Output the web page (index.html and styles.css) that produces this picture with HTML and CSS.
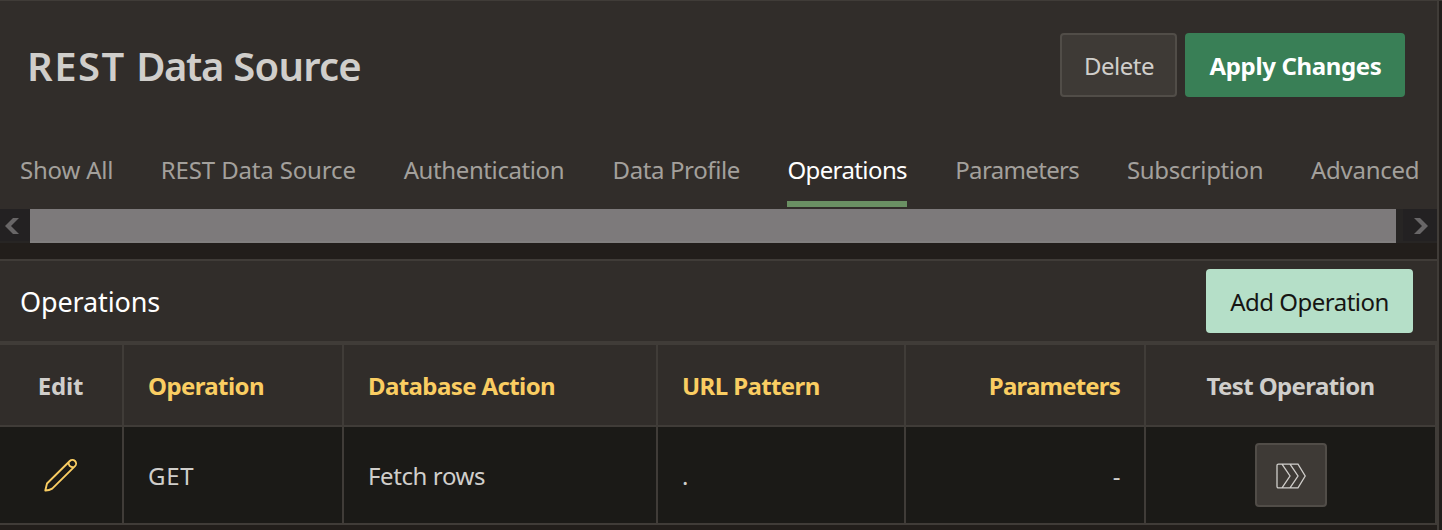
FILE: index.html
```html
<!DOCTYPE html>
<html lang="en">
<head>
<meta charset="utf-8">
<title>REST Data Source</title>
<link rel="stylesheet" href="styles.css">
</head>
<body>
<main class="page">
  <header class="header">
    <h1 class="title"><span class="title-rest">REST</span> <span class="title-data">Data</span> <span class="title-source">Source</span></h1>
    <div class="actions">
      <button class="btn btn-delete">Delete</button>
      <button class="btn btn-apply">Apply Changes</button>
    </div>
  </header>
  <nav class="tabs">
    <a class="tab tab-all">Show All</a>
    <a class="tab tab-source">REST Data Source</a>
    <a class="tab tab-auth">Authentication</a>
    <a class="tab tab-profile">Data Profile</a>
    <a class="tab tab-operations active">Operations</a>
    <a class="tab tab-params">Parameters</a>
    <a class="tab tab-subscription">Subscription</a>
    <a class="tab tab-advanced">Advanced</a>
  </nav>
  <div class="scrollbar">
    <div class="arrow arrow-left"><svg width="14" height="16" viewBox="0 0 14 16"><path d="M8 0h6L6 8l8 8H8L0 8z"/></svg></div>
    <div class="thumb"></div>
    <div class="arrow arrow-right"><svg width="14" height="16" viewBox="0 0 14 16"><path d="M6 0H0l8 8-8 8h6l8-8z"/></svg></div>
  </div>
  <section class="region">
    <div class="region-head">
      <h2 class="region-title">Operations</h2>
      <button class="btn btn-add">Add Operation</button>
    </div>
    <div class="grid">
      <div class="cell head center head-edit">Edit</div>
      <div class="cell head sort">Operation</div>
      <div class="cell head sort">Database Action</div>
      <div class="cell head sort">URL Pattern</div>
      <div class="cell head sort right sort-params">Parameters</div>
      <div class="cell head center">Test Operation</div>
      <div class="cell center">
        <svg class="pencil" width="34" height="34" viewBox="0 0 34 34"><path d="M1.300 32.500l1.700-7L25.800 3a3.500 3.500 0 0 1 5.200 5.200L8.200 30.600Q5 32.600 1.300 32.500zM24.600 4.200q-.6 4.600 5.200 5.200"/></svg>
      </div>
      <div class="cell get">GET</div>
      <div class="cell">Fetch rows</div>
      <div class="cell">.</div>
      <div class="cell right">-</div>
      <div class="cell center">
        <button class="btn btn-run"><svg width="30" height="26" viewBox="0 0 30 26"><path d="M2.500 1.200H22L29.200 13 22 24.800H2.500Q1 24.800 1 23.300V2.700Q1 1.200 2.500 1.200zM6 1.200L14 13 6 24.800M14 1.200L22 13 14 24.800"/></svg></button>
      </div>
    </div>
  </section>
</main>
</body>
</html>
```
FILE: styles.css
```css
* { box-sizing: border-box; }
body {
  margin: 0;
  height: 530px;
  overflow: hidden;
  background: #221e1b;
  color: #d0cecb;
  font: 24px/32px "Noto Sans", sans-serif;
  border-top: 1px solid #403c38;
}
.page { width: 1439px; height: 529px; border-right: 2px solid #403c38; }
.header {
  height: 132px;
  padding: 32px 32px 0 27px;
  display: flex;
  justify-content: space-between;
  align-items: flex-start;
  background: #312d2a;
}
.title { margin: 0; font-size: 40px; font-weight: 600; line-height: 66px; }
.title-rest { letter-spacing: 1.5px; }
.title-data { letter-spacing: -1.4px; }
.title-source { letter-spacing: -0.8px; }
.actions { display: flex; gap: 8px; }
.btn {
  height: 64px;
  padding: 1px 0 0 1px;
  border: 0;
  border-radius: 4px;
  font: inherit;
  letter-spacing: -0.5px;
  color: #d0cecb;
}
.btn-delete { width: 117px; background: #3e3a36; border: 2px solid #514d48; }
.btn-apply { width: 220px; background: #397f56; color: #fff; font-weight: 700; letter-spacing: -0.35px; }
.btn-add { width: 207px; padding-left: 0; background: #b5dfc8; color: #161513; }
.tabs {
  height: 76px;
  padding: 0 19px 2px 20px;
  display: flex;
  justify-content: space-between;
  background: #312d2a;
}
.tab { height: 74px; padding-top: 21px; white-space: nowrap; color: #a3a09c; }
.active { color: #fff; border-bottom: 6px solid #6a9063; }
.tab-all { width: 93px; letter-spacing: -0.2px; }
.tab-source { width: 195px; letter-spacing: -0.15px; }
.tab-auth { width: 161px; letter-spacing: -0.4px; }
.tab-profile { width: 127px; letter-spacing: -0.38px; }
.tab-operations { width: 120px; letter-spacing: -0.6px; }
.tab-params { width: 124px; letter-spacing: -0.65px; }
.tab-subscription { width: 136px; letter-spacing: -0.4px; }
.tab-advanced { width: 107px; letter-spacing: -0.25px; }
.scrollbar { height: 34px; display: flex; background: #272524; margin-bottom: 16px; }
.arrow { display: flex; align-items: center; border-bottom: 2px solid #272524; background: #232122; }
.arrow svg { fill: #686667; margin-top: 2px; }
.arrow-left { width: 30px; padding-left: 5px; }
.arrow-right { width: 34px; margin-left: 7px; padding-left: 11px; }
.thumb { width: 1366px; background: #7d7a7b; border-bottom: 2px solid #817f7f; }
.region { border-top: 2px solid #403c38; }
.region-head {
  height: 84px;
  padding: 0 24px 0 20px;
  display: flex;
  justify-content: space-between;
  align-items: center;
  background: #312d2a;
  border-bottom: 4px solid #403c38;
}
.region-title { margin: 0; padding-top: 2px; font-size: 27px; font-weight: 400; letter-spacing: -0.12px; color: #fff; }
.grid { display: grid; grid-template-columns: 124px 220px 314px 248px 240px 291px; grid-template-rows: 82px 98px; }
.cell {
  display: flex;
  align-items: center;
  padding: 1px 24px 0;
  border-right: 2px solid #403c38;
  border-bottom: 2px solid #403c38;
  background: #1b1a17;
  letter-spacing: -0.4px;
}
.get { letter-spacing: 0.7px; }
.head { background: #312d2a; font-weight: 700; letter-spacing: -0.6px; }
.head-edit { letter-spacing: -0.2px; padding-right: 1px !important; }
.sort { color: #facd62; }
.sort-params { letter-spacing: -0.8px; }
.right { justify-content: flex-end; }
.center { justify-content: center; padding-left: 0; padding-right: 0; }
.pencil { fill: none; stroke: #facd62; stroke-width: 1.900; stroke-linejoin: round; margin-right: 1px; margin-bottom: 1px; }
.btn-run { width: 72px; margin-bottom: 1px; padding: 0; display: flex; align-items: center; justify-content: center; background: #3e3a36; border: 2px solid #514d48; }
.btn-run svg { fill: none; stroke: #d0cecb; stroke-width: 1.300; margin-top: 2px; }
```
